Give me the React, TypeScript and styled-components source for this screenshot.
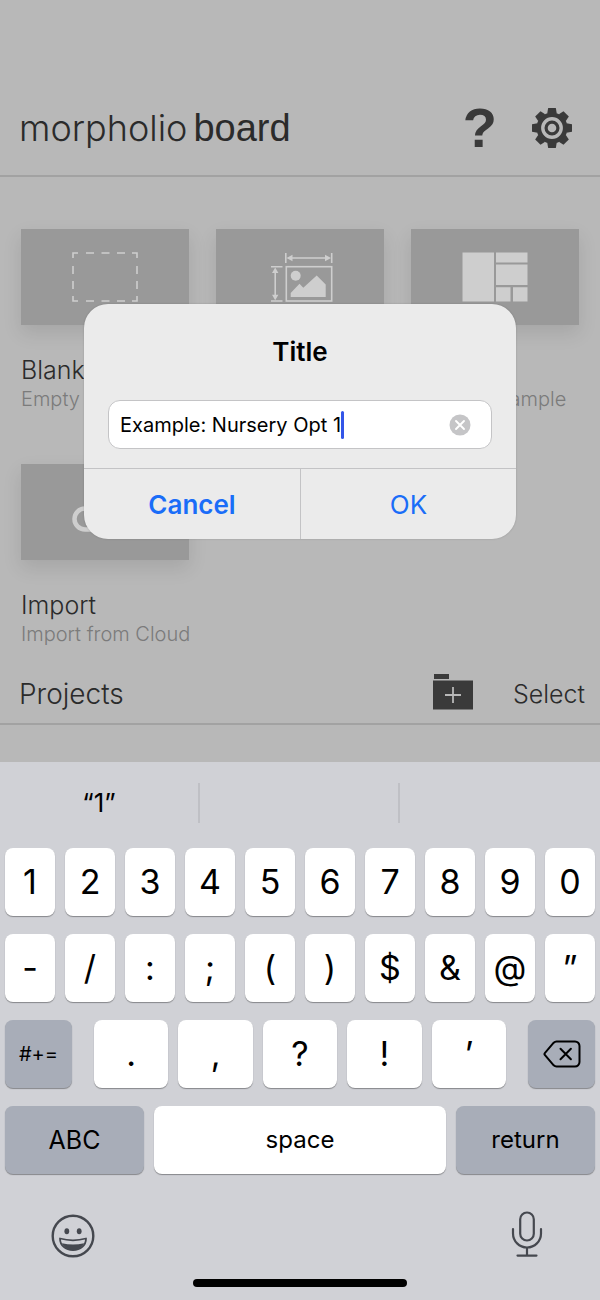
import React, { useState } from 'react';
import styled, { createGlobalStyle, css } from 'styled-components';

const GlobalStyle = createGlobalStyle`
  *, *::before, *::after { box-sizing: border-box; }
  body { margin: 0; background: #b8b8b8; font-family: Inter, "Liberation Sans", sans-serif; }
  button, input { font: inherit; color: inherit; margin: 0; padding: 0; border: 0; background: none; outline: none; }
  button { cursor: pointer; }
  svg { display: block; }
`;

const Screen = styled.div`
  display: flex;
  flex-direction: column;
  min-height: 100vh;
`;

const Main = styled.main`
  position: relative;
  flex: 1;
  padding-bottom: 37px;
  background: #b8b8b8;
  color: #2b2b2b;
  font-weight: 300;
`;

const Header = styled.header`
  display: flex;
  align-items: center;
  justify-content: space-between;
  height: 177px;
  padding: 80px 27px 0 19px;
  border-bottom: 2px solid #a2a2a2;
`;

const Brand = styled.h1`
  display: flex;
  gap: 6px;
  margin: 0;
  font-size: 36px;
  line-height: 44px;
  font-weight: 300;
`;

const BrandStrong = styled.span`
  font-family: "Liberation Sans", sans-serif;
  font-size: 38px;
  font-weight: 400;
`;

const HeaderActions = styled.div`
  display: flex;
  align-items: center;
  gap: 34px;
  color: #3a3a3a;
`;

const HelpButton = styled.button`
  font-family: "Liberation Sans", sans-serif;
  font-size: 56px;
  line-height: 56px;
  font-weight: 700;
`;

const Templates = styled.section`
  display: grid;
  grid-template-columns: repeat(3, minmax(0, 1fr));
  gap: 52px 27px;
  padding: 52px 21px 0;
`;

const Card = styled.button`
  display: flex;
  flex-direction: column;
  text-align: left;
  font-weight: 300;
`;

const Tile = styled.span`
  display: flex;
  align-items: center;
  justify-content: center;
  width: 100%;
  height: 96px;
  margin-bottom: 29px;
  background: #999;
  color: #cecece;
  box-shadow: 0 8px 18px rgba(0, 0, 0, 0.1);
`;

const CardTitle = styled.span`
  height: 32px;
  font-size: 25px;
  line-height: 32px;
`;

const CardNote = styled.span`
  height: 26px;
  font-size: 20px;
  line-height: 26px;
  color: #7b7b7b;
  white-space: nowrap;
`;

const ProjectsBar = styled.section`
  display: flex;
  align-items: center;
  height: 78px;
  padding: 14px 15px 0 19px;
  border-bottom: 2px solid #a2a2a2;
`;

const ProjectsTitle = styled.h2`
  flex: 1;
  margin: 0;
  padding-top: 3px;
  font-size: 28px;
  line-height: 32px;
  font-weight: 300;
`;

const SelectButton = styled.button`
  margin-left: 40px;
  padding-top: 3px;
  font-size: 25px;
  line-height: 32px;
  font-weight: 300;
`;

const Overlay = styled.div`
  position: absolute;
  inset: 0;
  display: flex;
  align-items: flex-start;
  justify-content: center;
  padding-top: 304px;
`;

const Dialog = styled.form`
  width: 432px;
  max-width: 90%;
  overflow: hidden;
  border-radius: 24px;
  background: #ebebeb;
  color: #000;
  box-shadow: 0 0 2px rgba(0, 0, 0, 0.2);
`;

const DialogTitle = styled.label`
  display: block;
  padding: 32px 0;
  font-size: 26px;
  line-height: 32px;
  font-weight: 600;
  text-align: center;
`;

const Field = styled.div`
  display: flex;
  align-items: center;
  height: 49px;
  margin: 0 24px 19px;
  padding: 0 20px 0 11px;
  border: 1px solid #c4c4c6;
  border-radius: 12px;
  background: #fff;
`;

const FieldInput = styled.input`
  field-sizing: content;
  min-width: 0;
  font-size: 20px;
  line-height: 28px;
  font-weight: 400;
  caret-color: transparent;
`;

const Caret = styled.span`
  width: 3px;
  height: 28px;
  border-radius: 2px;
  background: #3355e8;
`;

const ClearButton = styled.button`
  margin-left: auto;
`;

const DialogActions = styled.div`
  display: grid;
  grid-template-columns: 1fr 1fr;
  border-top: 1px solid #c3c3c5;
`;

const DialogButton = styled.button<{ $strong?: boolean }>`
  height: 70px;
  font-size: 26px;
  font-weight: ${(p) => (p.$strong ? 600 : 400)};
  color: #1a6df8;

  & + & { border-left: 1px solid #c3c3c5; }
`;

const Keyboard = styled.section`
  background: #d0d1d6;
  color: #000;
`;

const Suggestions = styled.div`
  display: grid;
  grid-template-columns: repeat(3, 1fr);
  padding: 21px 0 25px;
`;

const Suggestion = styled.button`
  height: 40px;
  font-size: 26px;
  line-height: 40px;

  &:not(:last-child) { border-right: 2px solid #bfc0c5; }
`;

const KeyRows = styled.div`
  display: flex;
  flex-direction: column;
  gap: 18px;
  padding: 0 5px;
`;

const KeyRow = styled.div<{ $inset?: boolean }>`
  display: flex;
  flex: 1;
  gap: 10px;
  margin: ${(p) => (p.$inset ? '0 12px' : '0')};
`;

const Key = styled.button<{ $tone?: 'dark'; $width?: string; $size?: number }>`
  ${(p) => (p.$width ? css`flex: 0 0 ${p.$width};` : css`flex: 1 1 0;`)}
  display: flex;
  align-items: center;
  justify-content: center;
  min-width: 0;
  height: 68px;
  border-radius: 8px;
  background: ${(p) => (p.$tone === 'dark' ? '#a8adb8' : '#fff')};
  box-shadow: 0 1px 1px #86878b;
  font-size: ${(p) => p.$size ?? 34}px;
  line-height: 40px;
`;

const KeyboardFooter = styled.footer`
  display: flex;
  flex-direction: column;
  align-items: center;
  height: 126px;
  padding: 35px 50px 0;
  color: #45484f;
`;

const FooterButtons = styled.div`
  display: flex;
  align-items: center;
  justify-content: space-between;
  width: 100%;
  height: 54px;
`;

const HomeIndicator = styled.div`
  width: 214px;
  height: 8px;
  margin-top: 16px;
  border-radius: 4px;
  background: #000;
`;

const GearIcon = () => (
  <svg width="42" height="42" viewBox="-21 -21 42 42" fill="none" stroke="currentColor">
    <circle r="13.2" strokeWidth="4.6" />
    <circle r="5.9" strokeWidth="3.2" />
    {[0, 45, 90, 135, 180, 225, 270, 315].map((angle) => (
      <path key={angle} d="M-4.800-14.500-3.800-20H3.800L4.800-14.500Z" fill="currentColor" stroke="none" transform={`rotate(${angle})`} />
    ))}
  </svg>
);

const BlankIcon = () => (
  <svg width="66" height="50" viewBox="0 0 66 50" fill="none" stroke="currentColor" strokeWidth="1.6">
    <path d="M1 6V1H6M14 1h8M29.500 1h8M45 1h8M60 1h5V6M65 14v8M65 29v8M65 44v5H60M53 49h-8M37.500 49h-8M22 49h-8M6 49H1V44M1 37v-8M1 22v-8" />
  </svg>
);

const ImageIcon = () => (
  <svg width="66" height="50" viewBox="0 0 66 50" fill="none" stroke="currentColor" strokeWidth="1.6">
    <path d="M18.800 1v10M64.700 1v10M22 6h40M4 14.700h11.500M4 49h11.500M8.200 18v28" />
    <path d="M19.500 6l6-3.200v6.400zM64 6l-6-3.200v6.400zM8.200 15.500l-3.200 5.500h6.400zM8.200 48.200l-3.200-5.500h6.400z" fill="currentColor" stroke="none" />
    <rect x="19.300" y="14.700" width="45.400" height="34.300" />
    <path d="M23.700 45v-4l8.800-9.200 3.800 4L49.700 23.500l9 9V45z" fill="currentColor" stroke="none" />
    <circle cx="28.700" cy="23.700" r="5" fill="currentColor" stroke="none" />
  </svg>
);

const LayoutIcon = () => (
  <svg width="66" height="50" viewBox="0 0 66 50" fill="currentColor">
    <path d="M.500.500h31.500v49H.500zM34 .500h31.500v10H34zM34 12.500h31.500V33H34zM34 35.200h14.500v14.300H34zM51 35.200h14.500v14.300H51z" />
  </svg>
);

const CloudIcon = () => (
  <svg width="68" height="48" viewBox="0 0 68 48" fill="none" stroke="currentColor" strokeWidth="4.500" strokeLinejoin="round">
    <path d="M14 41.500a10.500 10.500 0 0 1 0-21c2 0 3 .3 4.500 1C20 12 27 6 36 6c10 0 16 7 17 15a10.500 10.500 0 0 1 1 20.500z" />
  </svg>
);

const FolderIcon = () => (
  <svg width="40" height="36" viewBox="0 0 40 36">
    <path d="M1 0h15v5H1zM0 6.500h40v29H0z" fill="#3a3a3a" />
    <path d="M20 13v16M12 21h16" stroke="#b8b8b8" strokeWidth="1.800" />
  </svg>
);

const ClearIcon = () => (
  <svg width="22" height="22" viewBox="0 0 22 22">
    <circle cx="11" cy="11" r="10.500" fill="#c5c5c7" />
    <path d="M7 7l8 8M15 7l-8 8" stroke="#fff" strokeWidth="1.900" strokeLinecap="round" />
  </svg>
);

const DeleteIcon = () => (
  <svg width="38" height="28" viewBox="0 0 38 28" fill="none" stroke="currentColor" strokeWidth="2" strokeLinejoin="round" strokeLinecap="round">
    <path d="M13.500 1.500H32a4.500 4.500 0 0 1 4.500 4.500v16a4.500 4.500 0 0 1-4.500 4.500H13.500a4 4 0 0 1-2.800-1.200L2 15.200a1.800 1.800 0 0 1 0-2.400L10.700 2.700a4 4 0 0 1 2.800-1.200z" />
    <path d="M17.500 8.800l10.400 10.400M27.900 8.800L17.500 19.200" />
  </svg>
);

const SmileIcon = () => (
  <svg width="46" height="46" viewBox="0 0 46 46" fill="none" stroke="currentColor">
    <circle cx="23" cy="23" r="20.300" strokeWidth="2.400" />
    <ellipse cx="16.800" cy="18.300" rx="2.400" ry="3" fill="currentColor" stroke="none" />
    <ellipse cx="29.200" cy="18.300" rx="2.400" ry="3" fill="currentColor" stroke="none" />
    <path d="M10 25.500c8 2.200 18 2.200 26 0 0 7-5.500 11.500-13 11.500S10 32.500 10 25.500z" strokeWidth="1.800" strokeLinejoin="round" />
    <path d="M12 30.200c7 1.700 15 1.700 22 0-1.800 4.600-5.800 6.600-11 6.600S13.800 34.800 12 30.200z" fill="currentColor" stroke="none" />
  </svg>
);

const MicIcon = () => (
  <svg width="46" height="50" viewBox="0 0 46 50" fill="none" stroke="currentColor" strokeWidth="2.200" strokeLinecap="round">
    <rect x="16.200" y="1.500" width="13.600" height="28" rx="6.800" />
    <path d="M9 18v4.500a14 14 0 0 0 28 0V18M23 37v7.500M13.500 44.600h19" />
  </svg>
);

const templates = [
  { label: 'Blank', title: 'Blank', note: 'Empty', icon: <BlankIcon /> },
  { label: 'Image', icon: <ImageIcon /> },
  { label: 'Collage', note: 'Collage Example', icon: <LayoutIcon /> },
  { label: 'Import', title: 'Import', note: 'Import from Cloud', icon: <CloudIcon /> },
];

const digits = ['1', '2', '3', '4', '5', '6', '7', '8', '9', '0'];
const symbols = ['-', '/', ':', ';', '(', ')', '$', '&', '@', '”'];
const punctuation = ['.', ',', '?', '!', '’'];

export default function App() {
  const [title, setTitle] = useState('Example: Nursery Opt 1');
  const type = (text: string) => setTitle((value) => value + text);
  const renderKeys = (keys: string[]) =>
    keys.map((key) => (
      <Key key={key} type="button" onClick={() => type(key)}>{key}</Key>
    ));

  return (
    <Screen>
      <GlobalStyle />
      <Main>
        <Header>
          <Brand>
            <span>morpholio</span>
            <BrandStrong>board</BrandStrong>
          </Brand>
          <HeaderActions>
            <HelpButton type="button">?</HelpButton>
            <button type="button" aria-label="Settings"><GearIcon /></button>
          </HeaderActions>
        </Header>

        <Templates>
          {templates.map((item) => (
            <Card key={item.label} type="button" aria-label={item.label}>
              <Tile>{item.icon}</Tile>
              <CardTitle>{item.title}</CardTitle>
              <CardNote>{item.note}</CardNote>
            </Card>
          ))}
        </Templates>

        <ProjectsBar>
          <ProjectsTitle>Projects</ProjectsTitle>
          <button type="button" aria-label="New folder"><FolderIcon /></button>
          <SelectButton type="button">Select</SelectButton>
        </ProjectsBar>

        <Overlay>
          <Dialog role="dialog" onSubmit={(event) => event.preventDefault()}>
            <DialogTitle htmlFor="board-title">Title</DialogTitle>
            <Field>
              <FieldInput id="board-title" value={title} onChange={(event) => setTitle(event.target.value)} />
              <Caret />
              <ClearButton type="button" aria-label="Clear text" onClick={() => setTitle('')}><ClearIcon /></ClearButton>
            </Field>
            <DialogActions>
              <DialogButton type="button" $strong>Cancel</DialogButton>
              <DialogButton type="submit">OK</DialogButton>
            </DialogActions>
          </Dialog>
        </Overlay>
      </Main>

      <Keyboard aria-label="Keyboard">
        <Suggestions>
          <Suggestion type="button">“1”</Suggestion>
          <Suggestion type="button" aria-label="Second suggestion" />
          <Suggestion type="button" aria-label="Third suggestion" />
        </Suggestions>
        <KeyRows>
          <KeyRow>{renderKeys(digits)}</KeyRow>
          <KeyRow>{renderKeys(symbols)}</KeyRow>
          <KeyRow>
            <Key type="button" $tone="dark" $width="67px" $size={20}>#+=</Key>
            <KeyRow $inset>{renderKeys(punctuation)}</KeyRow>
            <Key type="button" $tone="dark" $width="67px" aria-label="Delete" onClick={() => setTitle((value) => value.slice(0, -1))}>
              <DeleteIcon />
            </Key>
          </KeyRow>
          <KeyRow>
            <Key type="button" $tone="dark" $width="139px" $size={25}>ABC</Key>
            <Key type="button" $size={24} onClick={() => type(' ')}>space</Key>
            <Key type="button" $tone="dark" $width="139px" $size={24}>return</Key>
          </KeyRow>
        </KeyRows>
        <KeyboardFooter>
          <FooterButtons>
            <button type="button" aria-label="Emoji"><SmileIcon /></button>
            <button type="button" aria-label="Dictate"><MicIcon /></button>
          </FooterButtons>
          <HomeIndicator />
        </KeyboardFooter>
      </Keyboard>
    </Screen>
  );
}
